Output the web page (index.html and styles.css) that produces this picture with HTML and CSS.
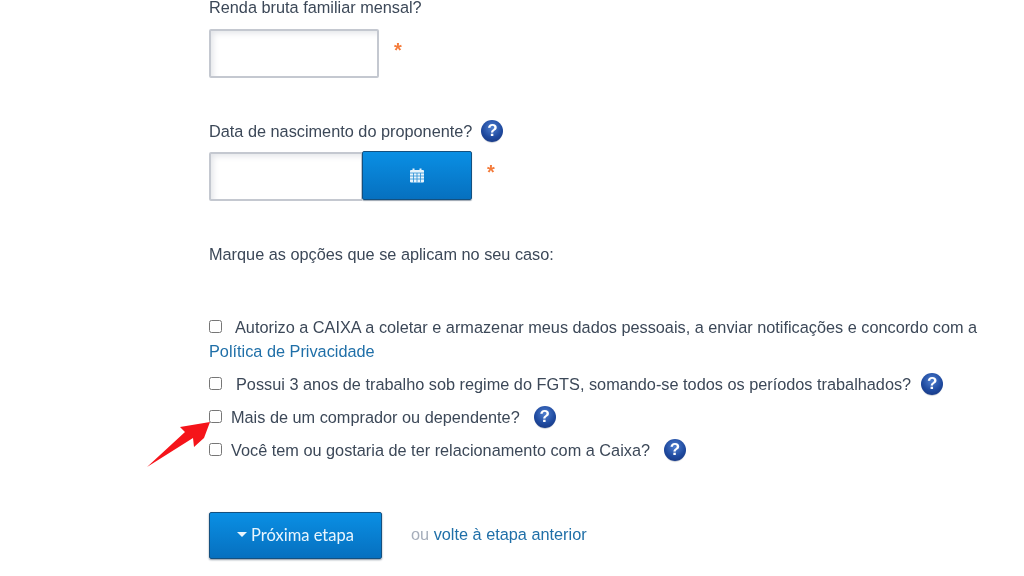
FILE: index.html
```html
<!DOCTYPE html>
<html lang="pt-BR">
<head>
<meta charset="utf-8">
<title>Simulador</title>
<link rel="stylesheet" href="styles.css">
</head>
<body>
<main class="form">
  <div class="label label-first">Renda bruta familiar mensal?</div>
  <div class="field field-income">
    <input class="text-input input-income" type="text">
    <span class="req req-income">*</span>
  </div>
  <div class="label label-birth">Data de nascimento do proponente? <span class="help help-birth">?</span></div>
  <div class="field field-birth">
    <input class="text-input input-birth" type="text">
    <button class="btn btn-cal" type="button">
      <svg class="cal" viewBox="0 0 16 16" width="16" height="17">
        <path fill="#e8f4fc" d="M1 3.500a1 1 0 0 1 1-1h1.500V1h2v1.500h5V1h2v1.500H14a1 1 0 0 1 1 1V14a1 1 0 0 1-1 1H2a1 1 0 0 1-1-1z"/>
        <path stroke="#2a8fd6" stroke-width=".8" fill="none" d="M1 5.500h14M1 8.500h14M1 11.500h14M4.500 5.500V15M8 5.500V15M11.500 5.500V15"/>
      </svg>
    </button>
    <span class="req req-birth">*</span>
  </div>
  <p class="intro">Marque as opções que se aplicam no seu caso:</p>
  <div class="check-row row-privacy">
    <input type="checkbox" class="check"><span class="gap-a">Autorizo a CAIXA a coletar e armazenar meus dados pessoais, a enviar notificações e concordo com a</span>
    <a class="link link-block" href="#">Política de Privacidade</a>
  </div>
  <div class="check-row row-fgts">
    <input type="checkbox" class="check check-flex"><span class="gap-b">Possui 3 anos de trabalho sob regime do FGTS, somando-se todos os períodos trabalhados?</span><span class="help help-fgts">?</span>
  </div>
  <div class="check-row row-buyer">
    <input type="checkbox" class="check check-flex"><span class="gap-c">Mais de um comprador ou dependente?</span><span class="help help-buyer">?</span>
  </div>
  <div class="check-row row-rel">
    <input type="checkbox" class="check check-flex"><span class="gap-c">Você tem ou gostaria de ter relacionamento com a Caixa?</span><span class="help help-rel">?</span>
  </div>
  <div class="actions">
    <button class="btn btn-next" type="button"><span class="caret"></span>Próxima etapa</button>
    <span class="back"><span class="or">ou</span> <a class="link" href="#">volte à etapa anterior</a></span>
  </div>
</main>
<svg class="arrow" width="70" height="50" viewBox="0 0 70 50">
  <polygon fill="#f5141a" points="63,1 57,17 47,26 46,17 0,46 38,11 33,6"/>
</svg>
</body>
</html>
```
FILE: styles.css
```css
* { box-sizing: border-box; }
html, body { margin: 0; height: 576px; overflow: hidden; background: #fff; }
body {
  position: relative;
  font-family: "Liberation Sans", Arial, sans-serif;
  font-size: 16.3px;
  color: #3c4858;
}
.form { padding-left: 209px; width: 1010px; filter: blur(0.4px); }
.label { line-height: 20px; }
.label-first { margin-top: -3px; height: 20px; }
.label-birth { margin-top: 42px; display: flex; align-items: center; }
.field { display: flex; align-items: flex-start; }
.field-income { margin-top: 12px; }
.field-birth { margin-top: 9px; }
.text-input {
  height: 49px;
  border: 2px solid #c4c8d0;
  border-radius: 2px;
  background: #fff;
  box-shadow: inset 5px 5px 6px -3px #e2e4e8;
  outline: 0;
}
.input-income { width: 170px; }
.input-birth { width: 153px; margin-top: 1px; border-right-width: 1px; border-radius: 2px 0 0 2px; }
.req { color: #f47c3c; font-size: 20px; font-weight: 700; line-height: 20px; }
.req-income { margin: 11px 0 0 15px; }
.req-birth { margin: 11px 0 0 15px; }
.btn {
  border: 1px solid #14507f;
  border-radius: 2px;
  background: linear-gradient(#0a8fe4, #0670bf);
  color: #e8f5fd;
  padding: 0;
  display: flex;
  align-items: center;
  justify-content: center;
}
.btn-cal { width: 110px; height: 49px; box-shadow: 0 1px 1px #9aa4b0; }
.cal { display: block; }
.help {
  flex: none;
  display: inline-block;
  width: 22px;
  height: 22px;
  border-radius: 50%;
  background: radial-gradient(circle at 50% 35%, #4f7fd0, #1f4a9f 55%, #142f74);
  box-shadow: 0 2px 1px -1px #c9ccd2;
  color: #fff;
  font: 700 17px/22px "Liberation Sans", Arial, sans-serif;
  text-align: center;
}
.intro { margin: 43px 0 0; line-height: 20px; }
.check-row { line-height: 24px; }
.check { width: 13px; height: 13px; margin: 0; vertical-align: 0; }
.check-flex { margin-top: -2px; }
.row-privacy { margin-top: 51px; }
.row-fgts { margin-top: 9px; display: flex; align-items: center; height: 24px; }
.row-buyer { margin-top: 9px; display: flex; align-items: center; height: 24px; }
.row-rel { margin-top: 9px; display: flex; align-items: center; height: 24px; }
.gap-a { margin-left: 13px; }
.gap-b { margin-left: 14px; }
.gap-c { margin-left: 9px; }
.help-birth { margin-left: 9px; }
.help-fgts { margin-left: 10px; }
.help-buyer { margin-left: 14px; }
.help-rel { margin-left: 14px; }
.link { color: #1f6fa8; text-decoration: none; }
.link-block { display: block; }
.actions { margin-top: 50px; display: flex; align-items: flex-start; }
.btn-next {
  width: 173px;
  height: 47px;
  font-family: "Lato", sans-serif;
  font-size: 16.500px;
  padding-bottom: 2px;
  box-shadow: 0 1px 2px #8a94a0;
}
.caret {
  border-left: 5px solid transparent;
  border-right: 5px solid transparent;
  border-top: 5px solid #e8f5fd;
  margin-right: 4px;
}
.back { margin: 12px 0 0 29px; line-height: 20px; }
.or { color: #a6aebb; }
.arrow { position: absolute; left: 147px; top: 421px; filter: blur(0.4px); }
```
